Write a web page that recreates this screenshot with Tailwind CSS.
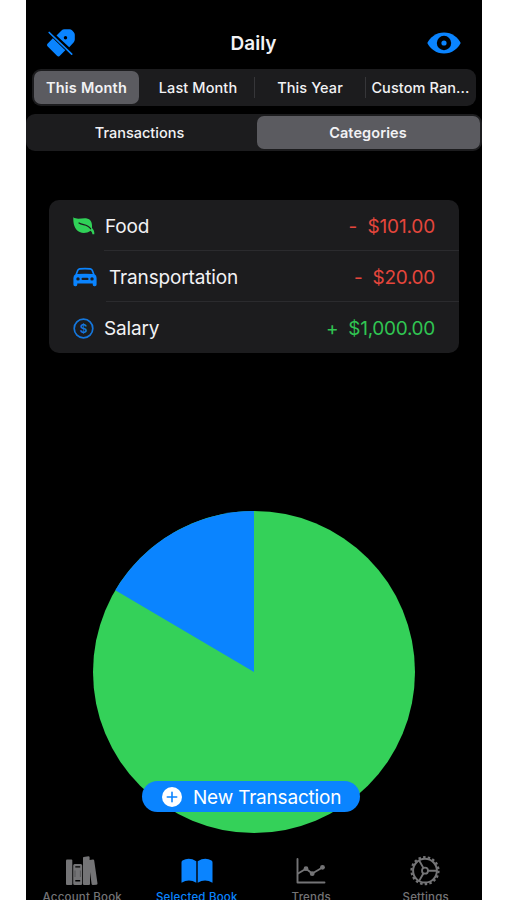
<!DOCTYPE html>
<html lang="en">

<head>
    <meta charset="UTF-8">
    <meta name="viewport" content="width=device-width, initial-scale=1.0">
    <title>Daily</title>
    <script src="https://cdn.jsdelivr.net/npm/@tailwindcss/browser@4"></script>
</head>

<body class="bg-white font-['Inter','Liberation_Sans',sans-serif]">
    <div class="relative ml-[26px] flex h-[900px] w-[456px] flex-col overflow-hidden bg-black text-[#f2f2f4]">
        <!-- Nav bar -->
        <header class="grid h-[69px] shrink-0 grid-cols-3 items-center pt-[17px] pr-[21px] pl-[20px]">
            <svg class="size-[30px]" viewBox="0 0 30 30" fill="#0a84ff">
                <path d="M10.500 7.500 15.500 2.500Q16.700 1.200 18.500 1.200H23.500Q25 1.200 26 2.200L27.800 4.200Q28.800 5.200 28.800 6.800V11.500Q28.800 13.200 27.600 14.400L23.200 19.200Z" />
                <path d="M6.900 10.200 1.500 15.800Q.300 17 1.500 18.200L11 27.800Q12.300 29.200 13.600 27.900L19.300 22.300Z" />
                <circle cx="19.500" cy="9.700" r="1.700" fill="#000" />
                <path d="M3.200 4.500 25.700 26.200" stroke="#0a84ff" stroke-width="1.700" stroke-linecap="round" />
            </svg>
            <h1 class="pt-[2px] text-center text-[19px] leading-6 font-semibold">Daily</h1>
            <svg class="h-[24px] w-[34px] justify-self-end" viewBox="0 0 34 24">
                <path d="M.300 12C3 6.500 9 1.500 17 1.500S31 6.500 33.700 12C31 17.500 25 22.500 17 22.500S3 17.500.300 12Z" fill="#0a84ff" />
                <circle cx="17" cy="12" r="7.200" fill="#000" />
                <circle cx="17" cy="12" r="2.600" fill="#0a84ff" />
            </svg>
        </header>

        <!-- Date range -->
        <div class="mx-[6px] flex h-[37px] shrink-0 items-center rounded-[9px] bg-[#1c1c1e] px-[2px] text-[14.5px] font-medium tracking-[0.1px] whitespace-nowrap">
            <div class="flex h-[33px] w-[105px] items-center justify-center rounded-[7px] bg-[#5b5b60] font-semibold tracking-[0.2px]">This Month</div>
            <div class="flex w-[115px] justify-center pl-[3px]">Last Month</div>
            <div class="h-[21px] w-px bg-[#363639]"></div>
            <div class="flex w-[110px] justify-center">This Year</div>
            <div class="h-[21px] w-px bg-[#363639]"></div>
            <div class="flex flex-1 justify-center pl-px">Custom Ran...</div>
        </div>

        <!-- View switch -->
        <div class="mt-[8px] flex h-[37px] shrink-0 items-center rounded-[9px] bg-[#1c1c1e] px-[2px] text-[14.5px] font-medium">
            <div class="flex flex-1 justify-center pr-[6px]">Transactions</div>
            <div class="flex h-[33px] w-[223px] items-center justify-center rounded-[7px] bg-[#5b5b60] pr-px font-semibold tracking-[0.1px]">Categories</div>
        </div>

        <!-- Category totals -->
        <div class="mx-[23px] mt-[49px] h-[153px] shrink-0 rounded-[10px] bg-[#1c1c1e] text-[19px] tracking-[-0.15px]">
            <div class="relative flex h-[51px] items-center pr-[24px] pl-[24px]">
                <svg class="size-[22px]" viewBox="0 0 22 22">
                    <path d="M.300 2.300C4 5 9 2.800 13 3.300C18 4 19.500 8 19 13C20.500 14.500 21.700 17 21.300 19.300L19.400 19.200C19.300 17.500 18.800 16.700 17.500 15.700C13 19.200 6.500 18.500 3.300 14.500C.500 11 .200 6 .300 2.300Z" fill="#30d158" />
                    <path d="M6 8C9.500 10.500 14.500 8.700 17.600 13.800" fill="none" stroke="#1c1c1e" stroke-width="1.200" stroke-linecap="round" />
                </svg>
                <span class="mt-[3px] ml-[10px]">Food</span>
                <span class="mt-[3px] ml-auto whitespace-pre text-[#e5463c]">-  $101.00</span>
                <div class="absolute right-0 bottom-0 left-[55px] h-px bg-[#2b2b2e]"></div>
            </div>
            <div class="relative flex h-[51px] items-center pr-[24px] pl-[24px]">
                <svg class="h-[22px] w-[24px]" viewBox="0 0 24 22">
                    <path fill="#0a84ff" fill-rule="evenodd" d="M6.500 2Q12 1.400 17.500 2Q19.200 2.300 20 4L21.600 8.200Q23.600 9.500 23.600 12V18.500Q23.600 20.200 22 20.200H21.200Q19.700 20.200 19.700 18.500V17.500H4.300V18.500Q4.300 20.200 2.800 20.200H2Q.400 20.200 .400 18.500V12Q.400 9.500 2.400 8.200L4 4Q4.800 2.300 6.500 2ZM6.800 3.700Q5.900 3.900 5.500 4.800L4.200 8Q12 7.300 19.800 8L18.500 4.800Q18.100 3.900 17.200 3.700Q12 3.100 6.800 3.700ZM5 11.200A1.700 1.700 0 1 0 5 14.600A1.700 1.700 0 1 0 5 11.200ZM19 11.200A1.700 1.700 0 1 0 19 14.600A1.700 1.700 0 1 0 19 11.200ZM9.700 11.700Q8.500 11.800 8.500 12.900T9.700 14.100H14.300Q15.500 14.100 15.500 12.900T14.300 11.700Z" />
                </svg>
                <span class="mt-[3px] ml-[12px]">Transportation</span>
                <span class="mt-[3px] ml-auto whitespace-pre tracking-[-0.3px] text-[#e5463c]">-  $20.00</span>
                <div class="absolute right-0 bottom-0 left-[57px] h-px bg-[#2b2b2e]"></div>
            </div>
            <div class="flex h-[51px] items-center pr-[24px] pl-[24px]">
                <svg class="mt-px size-[21px]" viewBox="0 0 21 21">
                    <circle cx="10.500" cy="10.500" r="9.300" fill="none" stroke="#1577dd" stroke-width="1.700" />
                    <text x="10.500" y="14.800" text-anchor="middle" font-size="12" font-weight="600" fill="#1577dd">$</text>
                </svg>
                <span class="mt-[3px] ml-[10px]">Salary</span>
                <span class="mt-[3px] ml-auto whitespace-pre tracking-[-0.3px] text-[#30c552]">+  $1,000.00</span>
            </div>
        </div>

        <!-- Spending pie -->
        <svg class="mt-[158px] ml-[67px] size-[322px] shrink-0" viewBox="0 0 322 322">
            <circle cx="161" cy="161" r="161" fill="#34d159" />
            <path d="M161 161 22.300 79.300A161 161 0 0 1 161 0Z" fill="#0a84ff" />
        </svg>

        <button class="absolute top-[781px] left-[116px] flex h-[31px] w-[218px] items-center rounded-full bg-[#0a84ff] pl-[20px] text-[19px] tracking-[-0.2px] text-white">
            <svg class="size-[20px]" viewBox="0 0 20 20">
                <circle cx="10" cy="10" r="10" fill="#fff" />
                <path d="M10 5.300V14.700M5.300 10H14.700" stroke="#0a84ff" stroke-width="1.600" stroke-linecap="round" />
            </svg>
            <span class="mt-[3px] ml-[11px] whitespace-nowrap">New Transaction</span>
        </button>

        <!-- Tab bar -->
        <nav class="mt-[22px] -ml-px grid h-[60px] w-[458px] shrink-0 grid-cols-4 text-[11.5px] leading-[14px] font-medium tracking-[0.2px] text-[#747476]">
            <div class="flex flex-col items-center">
                <svg class="h-[34px] w-[34px]" viewBox="0 0 34 34" fill="#747476">
                    <rect x="1" y="4.500" width="6.300" height="25.500" rx="1" />
                    <path fill-rule="evenodd" d="M9.700 9H15.700Q17.200 9 17.200 10.500V28.500Q17.200 30 15.700 30H9.700Q8.200 30 8.200 28.500V10.500Q8.200 9 9.700 9ZM10.300 11.300V12.500H15.200V11.300ZM10.300 25V26.500H15.200V25Z" />
                    <path d="M10 15.500V22M15.400 15.500V22" stroke="#4c4c4e" stroke-width=".700" />
                    <path d="M18.700 2 23.500 1.200Q24.500 1.200 24.600 2.200V5L28 4.600Q29 4.500 29.200 5.500L32.500 28.500Q32.600 29.500 31.500 29.700L27.800 30Q26.800 30 26.600 29L25 17V29Q25 30 24 30H19Q18 30 18 29V3Q18 2.200 18.700 2Z" />
                </svg>
                <span class="mt-px whitespace-nowrap">Account Book</span>
            </div>
            <div class="flex flex-col items-center text-[#0a84ff]">
                <svg class="h-[34px] w-[34px]" viewBox="0 0 34 34" fill="#0a84ff">
                    <path d="M16.300 6.300V27.700Q9 23.500 1.500 27.700V7.500Q1.500 6.300 2.500 5.600Q9 1.800 16.300 6.300Z" />
                    <path d="M17.700 6.300V27.700Q25 23.500 32.500 27.700V7.500Q32.500 6.300 31.500 5.600Q25 1.800 17.700 6.300Z" />
                </svg>
                <span class="mt-px whitespace-nowrap">Selected Book</span>
            </div>
            <div class="flex flex-col items-center">
                <svg class="h-[34px] w-[34px]" viewBox="0 0 34 34" fill="none" stroke="#747476" stroke-width="1.900" stroke-linecap="round" stroke-linejoin="round">
                    <path d="M3.500 4V27.500H30.500" />
                    <path d="M4 18.500 12 13.700 18.200 18.500 28.500 12.500" />
                    <g fill="#747476" stroke="none">
                        <circle cx="12" cy="13.700" r="2.400" />
                        <circle cx="18.200" cy="18.700" r="2.400" />
                        <circle cx="28.500" cy="12.300" r="2.400" />
                    </g>
                </svg>
                <span class="mt-px">Trends</span>
            </div>
            <div class="flex flex-col items-center">
                <svg class="-ml-px h-[34px] w-[34px]" viewBox="0 0 34 34" fill="none" stroke="#747476">
                    <circle cx="17" cy="15.700" r="13.500" stroke-width="2.200" stroke-dasharray="2.500 2.212" />
                    <circle cx="17" cy="15.700" r="11.900" stroke-width="2" />
                    <circle cx="17" cy="15.700" r="3" stroke-width="1.800" />
                    <path d="M20 15.700H29M15.500 13.100 11 5.300M15.500 18.300 11 26.100" stroke-width="1.900" />
                </svg>
                <span class="mt-px">Settings</span>
            </div>
        </nav>
    </div>
</body>

</html>
